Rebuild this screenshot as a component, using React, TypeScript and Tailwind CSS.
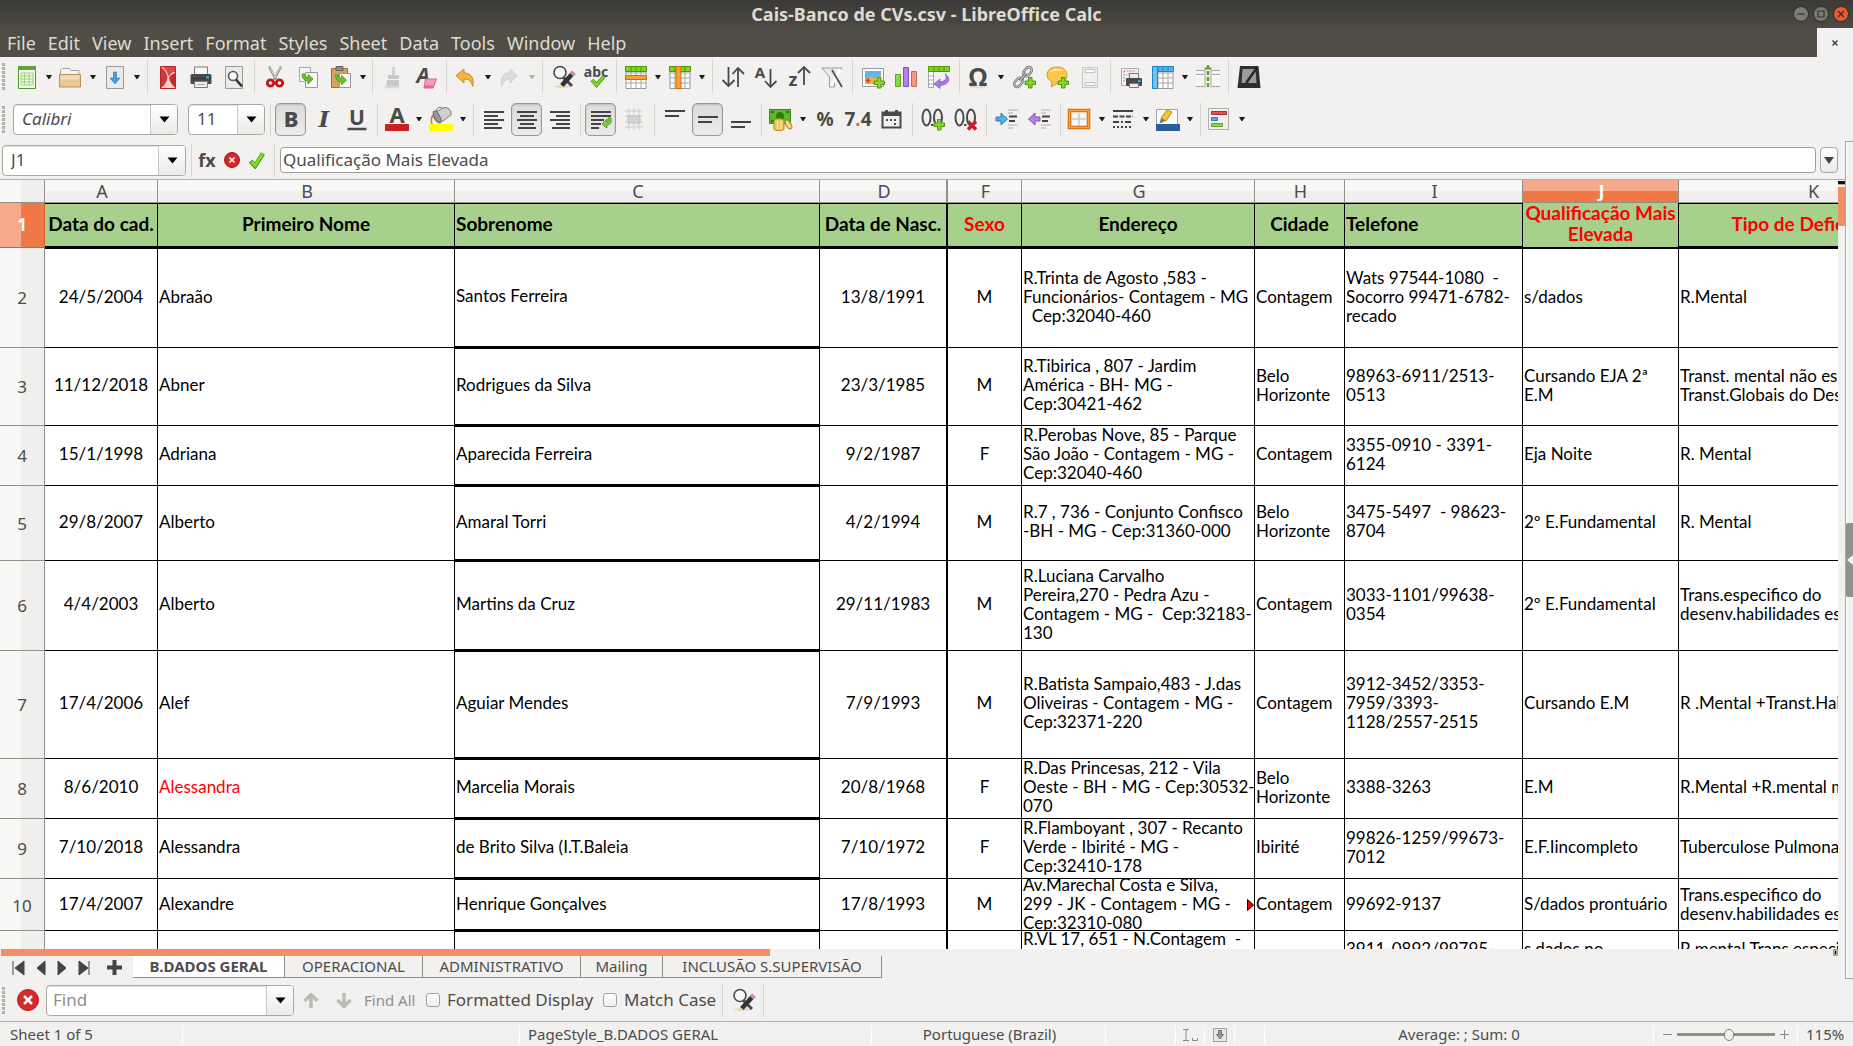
import React, { useState } from "react";

const UI = "font-['Noto_Sans','Open_Sans',sans-serif]";
const CELL = "font-['Lato','Liberation_Sans',sans-serif]";

/* ---------- toolbar primitives ---------- */

function Caret({ muted = false }: { muted?: boolean }) {
  return (
    <svg width="6" height="4" viewBox="0 0 6 4" aria-hidden="true">
      <path d="M0 0h6L3.5 4h-1z" fill={muted ? "#b5b4b2" : "#1a1a1a"} />
    </svg>
  );
}

function Icon({ children }: { children: React.ReactNode }) {
  return (
    <svg width="24" height="24" viewBox="0 0 24 24" fill="none" aria-hidden="true" className="shrink-0 overflow-visible">
      {children}
    </svg>
  );
}

function Tool({ label, pressed = false, children }: { label: string; pressed?: boolean; children: React.ReactNode }) {
  return (
    <button type="button" aria-label={label} title={label} className="flex h-9 w-[33px] shrink-0 items-center justify-center">
      <span
        className={
          pressed
            ? "flex h-[33px] w-[31px] items-center justify-center rounded-[5px] border border-[#9a9894] bg-linear-to-b from-[#dddcda] to-[#ecebe9] shadow-[inset_0_1px_2px_rgba(0,0,0,0.15)]"
            : "flex h-[33px] w-[31px] items-center justify-center"
        }
      >
        <Icon>{children}</Icon>
      </span>
    </button>
  );
}

function SplitTool({ label, muted = false, children }: { label: string; muted?: boolean; children: React.ReactNode }) {
  return (
    <span className="flex h-9 w-11 shrink-0">
      <button type="button" aria-label={label} title={label} className="flex w-8 items-center justify-center">
        <Icon>{children}</Icon>
      </button>
      <button type="button" aria-label={label + " options"} className="flex w-3 items-center justify-center">
        <Caret muted={muted} />
      </button>
    </span>
  );
}

function Sep() {
  return (
    <span className="flex h-[33px] w-2 shrink-0 justify-center">
      <span className="w-px bg-[#d6d4d1]" />
    </span>
  );
}

function Grip() {
  return (
    <span className="ml-[2px] flex h-[27px] w-[3px] shrink-0 flex-col justify-between">
      {[0, 1, 2, 3, 4, 5, 6].map((i) => (
        <span key={i} className="h-[3px] w-[3px] bg-[#b3b1ad]" />
      ))}
    </span>
  );
}

const FIELD = "flex h-[31px] shrink-0 overflow-hidden rounded-[4px] border border-[#aaa8a4] bg-white shadow-[inset_0_1px_1px_rgba(0,0,0,0.12)]";

function Combo({ label, width, value, placeholder, textClass }: { label: string; width: string; value?: string; placeholder?: string; textClass: string }) {
  return (
    <span className={`${FIELD} ${width}`}>
      <input
        aria-label={label}
        defaultValue={value}
        placeholder={placeholder}
        className={`min-w-0 flex-1 bg-transparent outline-none placeholder:text-[#8e8e8e] ${textClass}`}
      />
      <button type="button" aria-label={label + " list"} className="flex w-[27px] items-center justify-center border-l border-[#c9c7c4] bg-linear-to-b from-white to-[#ebeae8]">
        <svg width="11" height="7" viewBox="0 0 11 7" aria-hidden="true">
          <path d="M0.5 0.5h10L5.5 6.5z" fill="#000" />
        </svg>
      </button>
    </span>
  );
}

/* ---------- icon fragments ---------- */

const D = "#4a4a4a";

const Plus = () => <path d="M16.5 12.500h3.500v3.500h3.500v3.500h-3.500v3.500h-3.500v-3.500H13v-3.500h3.500z" fill="#8ad32f" stroke="#4b9a0c" />;
const Find = () => (
  <>
    <ellipse cx="12" cy="21.500" rx="9" ry="1.500" fill="#dcdad7" />
    <circle cx="9" cy="7.500" r="6" fill="#f7f7f7" stroke={D} strokeWidth="1.600" />
    <path d="M12 12l9 9" stroke={D} strokeWidth="3" />
    <path d="M19 8l3.500 3-10 11-3.500-3z" fill="#333" />
    <path d="M19 8l2-2 3.500 3-2 2z" fill="#d88acb" stroke="#9a5b8f" strokeWidth=".5" />
    <path d="M9 19l3.500 3L7.500 23.500z" fill="#f0df6a" />
  </>
);
const Printer = () => (
  <>
    <path d="M5.500 2h13v8h-13z" fill="#f8f8f8" stroke="#7b7b7b" />
    <rect x="1.500" y="9" width="21" height="10" rx="1.500" fill="#4a4a4a" />
    <path d="M2 13.500h20" stroke="#333" />
    <rect x="17" y="11.500" width="3" height="2" fill="#35b7ee" />
    <path d="M5.500 16.500h13v6h-13z" fill="#eee" stroke="#7b7b7b" />
    <path d="M8 19.500h8" stroke="#aaa" />
  </>
);
const Page = () => <path d="M3.500 1.500h17v22h-17z" fill="#eceae8" stroke="#9c9a97" />;
const Lines = ({ xs }: { xs: number[][] }) => (
  <>
    {xs.map(([x1, x2, y]) => (
      <path key={y} d={`M${x1} ${y}H${x2}`} stroke="#444" strokeWidth="2" />
    ))}
  </>
);
const GridBase = ({ top }: { top: string }) => (
  <>
    <path d="M2 1.500h20v22H2z" fill="#fff" stroke="#9a9a9a" />
    <path d="M2 8h20M2 13h20M2 18h20M7 4v20M12 4v20M17 4v20" stroke="#a3a3a3" />
    <path d="M1.500 1.500h21v5h-21z" fill={top} stroke={top === "#7ed321" ? "#4e9a06" : "#1a86c8"} />
    <path d="M7 2v4M12 2v4M17 2v4" stroke={top === "#7ed321" ? "#4e9a06" : "#1a86c8"} />
  </>
);
const T = ({ x, y, s, children, fill = D, w = 700, italic = false }: { x: number; y: number; s: number; children: string; fill?: string; w?: number; italic?: boolean }) => (
  <text x={x} y={y} fontSize={s} fontWeight={w} fill={fill} fontStyle={italic ? "italic" : "normal"} fontFamily="Noto Sans, sans-serif" textAnchor="middle">
    {children}
  </text>
);

function StandardBar() {
  return (
    <div role="toolbar" aria-label="Standard" className="flex h-[41px] shrink-0 items-center pb-[2px]">
      <Grip />
      <span className="w-[6px] shrink-0" />
      <SplitTool label="New">
        <path d="M3.500 1.500h17v22h-17z" fill="#f4fbef" stroke="#4f9a2b" />
        <path d="M3 1h18v4H3z" fill="#5da33a" />
        <path d="M6 8h12M6 11h12M6 14h12M6 17h12M6 20h12M6 8v12M9.500 8v12M14 8v12M18 8v12" stroke="#9ad07a" />
      </SplitTool>
      <SplitTool label="Open">
        <path d="M1.500 5l2-1.500h7l1.500 2h8v8H1.500z" fill="#f3f3f3" stroke="#a5a5a5" />
        <path d="M.5 9.500h21v12.500H.5z" fill="#e9c896" stroke="#b9935c" />
        <path d="M1.500 10.500h19v4h-19z" fill="#f3dcb6" />
      </SplitTool>
      <SplitTool label="Save">
        <Page />
        <path d="M10.500 7h3v6h3.500L12 19l-5-6h3.500z" fill="#3d9fe0" stroke="#2279bb" strokeWidth=".6" />
      </SplitTool>
      <Sep />
      <Tool label="Export as PDF">
        <path d="M4.500 1.500h15v22h-15z" fill="#f3d3d0" stroke="#b3262b" />
        <path d="M5 2c4 3 6 6 6.500 10.500C11 17 9 20 5 23z" fill="#cf3a3e" />
        <path d="M7 2h12v5c-3 0-5 2-6 5-1-4-3-7-6-10z" fill="#d9484b" />
        <path d="M13 13c1 4 3 7 6 9.500V8c-3 1-5 3-6 5z" fill="#c42a2e" />
      </Tool>
      <Tool label="Print"><Printer /></Tool>
      <Tool label="Print Preview">
        <Page />
        <circle cx="11" cy="11" r="4.500" fill="#f7f7f7" stroke="#5a5a5a" strokeWidth="1.600" />
        <path d="M14 14.500l6 7" stroke="#333" strokeWidth="2.600" />
      </Tool>
      <Sep />
      <Tool label="Cut">
        <path d="M6 1.500l7 13M18 1.500l-7 13" stroke="#8b8b8b" strokeWidth="2.400" />
        <path d="M6.500 2l6 11M17.500 2l-6 11" stroke="#e6e6e6" strokeWidth=".8" />
        <circle cx="7.500" cy="18" r="3.200" stroke="#c4161c" strokeWidth="2.800" />
        <circle cx="16.500" cy="18" r="3.200" stroke="#c4161c" strokeWidth="2.800" />
      </Tool>
      <Tool label="Copy">
        <path d="M3.500 2.500h11v14h-11z" fill="#f6f6f6" stroke="#a7a7a7" />
        <path d="M9.500 7.500h12v15h-12z" fill="#f9f9f9" stroke="#9a9a9a" />
        <path d="M6 9c0 5 3 7 6 7v3l5-5-5-4.500v3c-2 0-3-1.500-3-3.500z" fill="#6cc030" stroke="#3f8a12" strokeWidth=".7" />
      </Tool>
      <Tool label="Paste">
        <path d="M2.500 3.500h16v19h-16z" fill="#d3a25c" stroke="#9a6f33" />
        <path d="M7 1.500h7v4H7z" fill="#8a8a8a" stroke="#666" />
        <path d="M10.500 8.500h11v14h-11z" fill="#f9f9f9" stroke="#9a9a9a" />
        <path d="M6.500 10c0 5 3 7 6 7v3l5-5-5-4.500v3c-2 0-3-1.500-3-3.500z" fill="#6cc030" stroke="#3f8a12" strokeWidth=".7" />
      </Tool>
      <button type="button" aria-label="Paste options" className="flex h-9 w-[11px] shrink-0 items-center justify-center">
        <Caret />
      </button>
      <Sep />
      <Tool label="Clone Formatting">
        <path d="M11 2h3v8h-3z" fill="#d2d1cf" />
        <path d="M7 10h11v4H7zM6 15h12v6H5z" fill="#c9c8c6" />
        <ellipse cx="11" cy="22" rx="9" ry="1.500" fill="#dddbd9" />
      </Tool>
      <Tool label="Clear Direct Formatting">
        <T x={9} y={18} s={21} italic>A</T>
        <path d="M11.500 14h11l-3.500 9h-9z" fill="#f49ac0" stroke="#d8629a" />
        <path d="M10 20.500h10l-1 2.500h-9z" fill="#e8619b" />
      </Tool>
      <Sep />
      <SplitTool label="Undo">
        <path d="M2 10.500L10 4v4c6 0 11 4 8.500 13.500C17.500 16 15 14 10 14v4z" fill="#f5b63c" stroke="#c88a1c" />
      </SplitTool>
      <SplitTool label="Redo" muted>
        <path d="M19 10.500L12 4v4c-6 0-10 4-8 13.500C5 16 7.500 14 12 14v4z" fill="#dcdbd9" stroke="#cfcdcb" />
      </SplitTool>
      <Sep />
      <Tool label="Find and Replace"><Find /></Tool>
      <Tool label="Spelling">
        <T x={12} y={12} s={14}>abc</T>
        <path d="M8 15l4.500 5L20 11.500" stroke="#4c9a10" strokeWidth="4" />
        <path d="M8 15l4.500 5L20 11.500" stroke="#83d02c" strokeWidth="2.600" />
      </Tool>
      <Sep />
      <SplitTool label="Row">
        <GridBase top="#7ed321" />
        <path d="M1.500 10.500h21v4h-21z" fill="#f9a13a" stroke="#d66a0a" />
      </SplitTool>
      <SplitTool label="Column">
        <GridBase top="#7ed321" />
        <path d="M8 1.500h5v22H8z" fill="#f9a13a" stroke="#d66a0a" />
      </SplitTool>
      <Sep />
      <Tool label="Sort">
        <path d="M7.500 2v19M1.500 15l6 6 6-6M17 22V3M11.500 9L17 3l6 6" stroke={D} strokeWidth="1.800" />
      </Tool>
      <Tool label="Sort Ascending">
        <T x={6} y={13} s={15}>A</T>
        <path d="M16.500 4v18M11 16l5.500 6 6-6" stroke={D} strokeWidth="1.800" />
      </Tool>
      <Tool label="Sort Descending">
        <T x={6} y={21} s={18}>z</T>
        <path d="M17 20V2M11 8l6-6 6 6" stroke={D} strokeWidth="1.800" />
      </Tool>
      <Tool label="AutoFilter">
        <path d="M2 3h20l-7.500 9v10h-5V12z" fill="#e9e9e9" stroke="#9b9b9b" />
        <path d="M20 4l-9 17" stroke="#fff" strokeWidth="3" />
        <path d="M12 5l10 17" stroke="#555" strokeWidth="1.800" />
      </Tool>
      <Sep />
      <Tool label="Insert Image">
        <path d="M1.500 3.500h21v18h-21z" fill="#fff" stroke="#999" />
        <path d="M4 6h16v8H4z" fill="#5db8e8" />
        <path d="M4 14l5-2 5 1 6-2v8H4z" fill="#f2b23c" />
        <path d="M7 13v5M4.500 15.500h5" stroke="#d2441a" strokeWidth="1.600" />
        <Plus />
      </Tool>
      <Tool label="Insert Chart">
        <path d="M1.500 9.500h5v12h-5z" fill="#8ad84a" stroke="#5fa628" />
        <path d="M9.500 2.500h5v19h-5z" fill="#b184e6" stroke="#8251bd" />
        <path d="M17.500 6.500h5v15h-5z" fill="#ee9a8a" stroke="#cc6b5a" />
      </Tool>
      <Tool label="Pivot Table">
        <path d="M1.500 6.500h5v16h-5z" fill="#fff" stroke="#a5a5a5" />
        <path d="M2 11h5M2 15h5M2 19h5" stroke="#a5a5a5" />
        <path d="M1.500 1.500h21v5h-21z" fill="#7ed321" stroke="#4e9a06" />
        <path d="M7 2v4M12 2v4M17 2v4" stroke="#4e9a06" />
        <path d="M18 9c2 3 2 7-5 8v-3l-6 5 6 4.500v-3c9-1 12-7 5-11.500z" fill="#a67be0" stroke="#7a4dbb" strokeWidth=".7" />
      </Tool>
      <Sep />
      <SplitTool label="Special Character">
        <ellipse cx="11" cy="22" rx="9" ry="1.500" fill="#e0deda" />
        <T x={11} y={21} s={25}>Ω</T>
      </SplitTool>
      <Tool label="Insert Hyperlink">
        <g transform="rotate(-50 11 12)">
          <rect x="-1" y="9" width="10" height="6" rx="3" stroke="#6f6f6f" strokeWidth="2.600" />
          <rect x="-1" y="9" width="10" height="6" rx="3" stroke="#cfcfcf" />
          <rect x="13" y="9" width="10" height="6" rx="3" stroke="#6f6f6f" strokeWidth="2.600" />
          <rect x="13" y="9" width="10" height="6" rx="3" stroke="#cfcfcf" />
          <path d="M6 12h10" stroke="#6f6f6f" strokeWidth="3" />
          <path d="M6 12h10" stroke="#cfcfcf" />
        </g>
        <Plus />
      </Tool>
      <Tool label="Insert Comment">
        <path d="M12 2c6 0 10 3 10 8s-4 8-9 8l-7 4 1-5c-3-1.500-5-4-5-7 0-5 4-8 10-8z" fill="#fbc94a" stroke="#d79a1e" />
        <path d="M5 7c2-4 11-4 14-1-4-1-9 0-14 1z" fill="#fde7a6" />
        <Plus />
      </Tool>
      <Tool label="Headers and Footers">
        <path d="M4.500 2.500h15v20h-15z" fill="#f0efed" stroke="#c9c7c4" />
        <path d="M7 4.500h10v3H7zM7 17.500h10v3H7z" fill="#fafafa" stroke="#c4c2bf" />
      </Tool>
      <Sep />
      <Tool label="Define Print Area">
        <path d="M2.500 3.500h17v17h-17z" fill="#f5f5f5" stroke="#aaa" />
        <path d="M5 6h12M5 6v12" stroke="#e0525a" strokeDasharray="1.500 1.500" />
        <path d="M5 10h12M5 14h6M10 5v12M14 5v4" stroke="#ccc" />
        <path d="M10.500 8.500h9v5h-9z" fill="#eee" stroke="#777" />
        <rect x="7" y="13" width="16" height="8" rx="1" fill="#4a4a4a" />
        <rect x="19" y="15" width="2.500" height="2" fill="#35b7ee" />
        <path d="M10.500 18.500h9v4h-9z" fill="#eee" stroke="#777" />
      </Tool>
      <SplitTool label="Freeze Rows and Columns">
        <GridBase top="#4fb4ee" />
        <path d="M1.500 1.500h5v22h-5z" fill="#6cc0f2" stroke="#1a86c8" />
      </SplitTool>
      <Tool label="Split Window">
        <path d="M0 5.500h9v16H0zM15 5.500h9v16h-9z" fill="#f6f6f6" />
        <path d="M0 5.500h9v17M24 5.500h-9v17M0 9.500h8M16 9.500h8M0 21.500h8M16 21.500h8" stroke="#a5a5a5" />
        <path d="M12 0v24" stroke="#5aa626" strokeWidth="2.500" strokeDasharray="4 2" />
        <path d="M8.500 3.500h7" stroke="#5aa626" strokeWidth="2" />
      </Tool>
      <Sep />
      <Tool label="Show Draw Functions">
        <path d="M3 1h18.500l2 22H0.500z" fill="#2e2e2e" />
        <path d="M5.500 4h13l1 14h-15z" fill="#9b9b9b" />
        <path d="M19 2L9 16l-1 3 3-1.500L21 3z" fill="#222" />
      </Tool>
    </div>
  );
}

function FormattingBar() {
  return (
    <div role="toolbar" aria-label="Formatting" className="flex h-[43px] shrink-0 items-center pb-px">
      <Grip />
      <span className="w-2 shrink-0" />
      <Combo label="Font name" width="w-[165px]" value="Calibri" textClass="pl-2 text-[17px] italic text-[#4c4c4c]" />
      <span className="w-[10px] shrink-0" />
      <Combo label="Font size" width="w-[77px]" value="11" textClass="pl-2 text-[17px] text-[#4c4c4c]" />
      <span className="w-px shrink-0" />
      <Sep />
      <Tool label="Bold" pressed><T x={12} y={20} s={22} w={800}>B</T></Tool>
      <Tool label="Italic">
        <text x="12" y="20" fontSize="23" fontWeight="700" fontStyle="italic" fill={D} fontFamily="DejaVu Serif, serif" textAnchor="middle">I</text>
      </Tool>
      <Tool label="Underline">
        <T x={12} y={18} s={21}>U</T>
        <path d="M2.500 22h19" stroke={D} strokeWidth="2.500" />
      </Tool>
      <Sep />
      <SplitTool label="Font Color">
        <T x={12} y={16} s={22}>A</T>
        <path d="M0 17h24v7H0z" fill="#c9211e" />
      </SplitTool>
      <SplitTool label="Highlighting Color">
        <path d="M5 6l9-5c5-2 9 3 8 7l-11 8C7 16 3 10 5 6z" fill="#cfcfcf" stroke="#777" />
        <ellipse cx="8" cy="9.500" rx="2.500" ry="6" transform="rotate(-30 8 9.500)" fill="#9a9a9a" stroke="#666" />
        <path d="M7 5c0-4 4-6 6-4" stroke="#666" />
        <path d="M4 8c-2 3-2 6-1 9" stroke="#d9761a" strokeWidth="1.500" />
        <path d="M0 17h24v7H0z" fill="#ffff00" />
      </SplitTool>
      <Sep />
      <Tool label="Align Left"><Lines xs={[[2, 22, 5], [2, 16, 9], [2, 22, 13], [2, 16, 17], [2, 20, 21]]} /></Tool>
      <Tool label="Center Horizontally" pressed><Lines xs={[[2, 22, 5], [5, 19, 9], [2, 22, 13], [5, 19, 17], [3, 21, 21]]} /></Tool>
      <Tool label="Align Right"><Lines xs={[[2, 22, 5], [8, 22, 9], [2, 22, 13], [8, 22, 17], [4, 22, 21]]} /></Tool>
      <Sep />
      <Tool label="Wrap Text" pressed>
        <Lines xs={[[2, 22, 5], [2, 22, 9], [2, 15, 13], [2, 12, 17], [2, 10, 21]]} />
        <path d="M19 11h3c1 5-1 7-4 7v3l-5-4 5-5v3c1 0 1.500-1 1-4z" fill="#7cc93a" stroke="#3f8a12" strokeWidth=".7" />
      </Tool>
      <Tool label="Merge and Center Cells">
        <path d="M3 4h18M3 9h18M3 15h18M3 20h18M7 1v22M12 1v8M12 15v8M17 1v22" stroke="#cfcdcb" />
        <path d="M6 9h12v7H6z" fill="#d6d4d2" stroke="#c2c0bd" />
      </Tool>
      <Sep />
      <Tool label="Align Top"><Lines xs={[[2, 22, 4], [2, 16, 9]]} /></Tool>
      <Tool label="Center Vertically" pressed><Lines xs={[[2, 22, 10], [2, 16, 15]]} /></Tool>
      <Tool label="Align Bottom"><Lines xs={[[2, 22, 15], [2, 16, 20]]} /></Tool>
      <Sep />
      <SplitTool label="Format as Currency">
        <path d="M.5 2.500h21v14h-21z" fill="#5eb52e" stroke="#3a8a14" />
        <path d="M2 4h3v2H2zM17 4h3v2h-3zM2 13h3v2H2z" fill="#2f7d0c" />
        <circle cx="11" cy="9" r="4" fill="#2f7d0c" />
        <path d="M5 14c0-3 10-3 10 0v8c0 2-10 2-10 0z" fill="#e9c964" stroke="#a88424" />
        <path d="M8.500 14v9M12 14v9" stroke="#f9e9a9" />
        <ellipse cx="19.500" cy="17.500" rx="2.500" ry="5" transform="rotate(-30 19.500 17.500)" fill="#f1d87c" stroke="#a88424" />
      </SplitTool>
      <Tool label="Format as Percent"><T x={11} y={19} s={19}>%</T></Tool>
      <Tool label="Format as Number">
        <text x="11" y="19" fontSize="19" fontWeight="700" fill={D} fontFamily="Noto Sans, sans-serif" textAnchor="middle">7<tspan fill="#ed6b1c">.</tspan>4</text>
      </Tool>
      <Tool label="Format as Date">
        <path d="M2.500 5.500h18v15h-18z" fill="#f2f1f0" stroke={D} strokeWidth="2" />
        <path d="M2 5h19v4H2zM5 3h3v4H5zM15 3h3v4h-3z" fill={D} />
        <path d="M6 13h2M10 13h2M14 13h2M14 17h2" stroke={D} strokeWidth="2" />
      </Tool>
      <Sep />
      <Tool label="Add Decimal Place">
        <ellipse cx="5.500" cy="10.500" rx="4" ry="8" stroke={D} strokeWidth="2" />
        <ellipse cx="17" cy="10.500" rx="4" ry="8" stroke={D} strokeWidth="2" />
        <path d="M10 18h2.500" stroke={D} strokeWidth="2" />
        <Plus />
      </Tool>
      <Tool label="Delete Decimal Place">
        <ellipse cx="5.500" cy="10.500" rx="4" ry="8" stroke={D} strokeWidth="2" />
        <ellipse cx="17" cy="10.500" rx="4" ry="8" stroke={D} strokeWidth="2" />
        <path d="M10 18h2.500" stroke={D} strokeWidth="2" />
        <path d="M14 14.500l8 8M22 14.500l-8 8" stroke="#c5202a" strokeWidth="3.500" />
      </Tool>
      <Sep />
      <Tool label="Increase Indent">
        <path d="M13 3h10M13 6h5M13 18h10M13 21h5" stroke="#b0aeab" />
        <path d="M14 9.500h8M14 14h6" stroke="#444" strokeWidth="2" />
        <path d="M1 10h5V6l6.500 6L6 18v-4H1z" fill="#4fb0e6" stroke="#2a7fb5" />
      </Tool>
      <Tool label="Decrease Indent">
        <path d="M13 3h10M13 6h5M13 18h10M13 21h5" stroke="#b0aeab" />
        <path d="M14 9.500h8M14 14h6" stroke="#444" strokeWidth="2" />
        <path d="M12 10H7V6L.5 12 7 18v-4h5z" fill="#b184e6" stroke="#8251bd" />
      </Tool>
      <Sep />
      <SplitTool label="Borders">
        <path d="M1.500 3.500h19v17h-19z" fill="#f6f6f6" stroke="#d2640a" strokeWidth="3.500" />
        <path d="M1.500 3.500h19v17h-19z" stroke="#fba63c" strokeWidth="1.500" />
        <path d="M11 6v13M4 12h14" stroke="#b5b5b5" />
      </SplitTool>
      <SplitTool label="Border Style">
        <path d="M1 4h20" stroke="#444" strokeWidth="2" />
        <path d="M1 9.500h20" stroke="#444" strokeWidth="2" strokeDasharray="5 1.500" />
        <path d="M1 15h20" stroke="#444" strokeWidth="2" strokeDasharray="6 2 2 2" />
        <path d="M1 20h20" stroke="#444" strokeWidth="2" strokeDasharray="2 2" />
      </SplitTool>
      <SplitTool label="Border Color">
        <path d="M.5 2.500h21v18H.5z" fill="#fafafa" stroke="#a5a5a5" />
        <path d="M11 3l5 2-6 9-5-3z" fill="#f3c63a" stroke="#b98c12" />
        <path d="M5 11l4.500 3-6 2.500z" fill="#777" />
        <path d="M0 17h24v7H0z" fill="#2a6099" />
      </SplitTool>
      <Sep />
      <SplitTool label="Conditional Formatting">
        <path d="M.5 1.500h20v21H.5z" fill="#f1f0ee" stroke="#b0aeab" />
        <path d="M3.500 4.500h15v3h-15z" fill="#e0525a" stroke="#b02a32" />
        <path d="M3.500 10.500h6v3h-6z" fill="#4fb0e6" stroke="#2a7fb5" />
        <path d="M3.500 16.500h11v3h-11z" fill="#8ad84a" stroke="#5fa628" />
      </SplitTool>
    </div>
  );
}

function FormulaBar() {
  return (
    <div className="flex h-[38px] shrink-0 items-center">
      <span className="w-[2px]" />
      <Combo label="Name box" width="w-[184px]" value="J1" textClass="pl-2 pb-px text-[17px] text-[#4c4c4c]" />
      <span className="w-px" />
      <Sep />
      <button type="button" aria-label="Function Wizard" className="ml-1 flex w-4 justify-center text-lg leading-5 font-bold text-[#4a4a4a]">fx</button>
      <button type="button" aria-label="Cancel" className="ml-[9px]">
        <svg width="16" height="16" viewBox="0 0 16 16" aria-hidden="true">
          <circle cx="8" cy="8" r="7.500" fill="#d9262c" stroke="#a5161b" />
          <path d="M5.500 5.500l5 5M10.500 5.500l-5 5" stroke="#fff" strokeWidth="1.500" />
        </svg>
      </button>
      <button type="button" aria-label="Accept" className="ml-2">
        <svg width="18" height="18" viewBox="0 0 18 18" aria-hidden="true">
          <path d="M2.500 10l4.500 5L15 2.500" fill="none" stroke="#4c9a10" strokeWidth="4.500" />
          <path d="M3 10.500l4 4L14.500 3" fill="none" stroke="#86d830" strokeWidth="2.800" />
        </svg>
      </button>
      <span className="w-1" />
      <Sep />
      <input
        aria-label="Input line"
        defaultValue="Qualificação Mais Elevada"
        className="ml-[2px] h-[26px] min-w-0 flex-1 rounded-[4px] border border-[#9f9d99] bg-white px-[2px] pb-px text-[17px] text-[#4c4c4c] outline-none"
      />
      <button type="button" aria-label="Expand formula bar" className="mr-[7px] ml-1 flex h-[26px] w-[18px] items-center justify-center rounded-[4px] border border-[#aaa8a4] bg-linear-to-b from-white to-[#ebeae8]">
        <svg width="10" height="7" viewBox="0 0 10 7" aria-hidden="true"><path d="M0 0h10L5 7z" fill="#444" /></svg>
      </button>
    </div>
  );
}

/* ---------- sheet ---------- */

type Col = { id: string; w: string; head: string; headClass?: string; center?: boolean };
const COLS: Col[] = [
  { id: "A", w: "w-[113px]", head: "Data do cad.", headClass: "justify-center", center: true },
  { id: "B", w: "w-[297px]", head: "Primeiro Nome", headClass: "justify-center" },
  { id: "C", w: "w-[365px]", head: "Sobrenome" },
  { id: "D", w: "w-[128px]", head: "Data de Nasc.", headClass: "justify-center", center: true },
  { id: "F", w: "w-[74px]", head: "Sexo", headClass: "justify-center text-[#ff0000]", center: true },
  { id: "G", w: "w-[233px]", head: "Endereço", headClass: "justify-center" },
  { id: "H", w: "w-[90px]", head: "Cidade", headClass: "justify-center" },
  { id: "I", w: "w-[178px]", head: "Telefone" },
  { id: "J", w: "w-[156px]", head: "Qualificação Mais\nElevada", headClass: "justify-center text-[#ff0000]" },
  { id: "K", w: "w-[268px]", head: "Tipo de Deficiência", headClass: "justify-center text-[#ff0000]" },
];

type Row = { n: number; h: string; cells: string[] };
const ROWS: Row[] = [
  { n: 2, h: "h-[100px] pb-1", cells: ["24/5/2004", "Abraão", "Santos Ferreira", "13/8/1991", "M", "R.Trinta de Agosto ,583 -\nFuncionários- Contagem - MG\n  Cep:32040-460", "Contagem", "Wats 97544-1080  -\nSocorro 99471-6782-\nrecado", "s/dados", "R.Mental"] },
  { n: 3, h: "h-[78px] pb-1", cells: ["11/12/2018", "Abner", "Rodrigues da Silva", "23/3/1985", "M", "R.Tibirica , 807 - Jardim\nAmérica - BH- MG -\nCep:30421-462", "Belo\nHorizonte", "98963-6911/2513-\n0513", "Cursando EJA 2ª\nE.M", "Transt. mental não especificado\nTranst.Globais do Desenvolv."] },
  { n: 4, h: "h-[60px] pb-1", cells: ["15/1/1998", "Adriana", "Aparecida Ferreira", "9/2/1987", "F", "R.Perobas Nove, 85 - Parque\nSão João - Contagem - MG -\nCep:32040-460", "Contagem", "3355-0910 - 3391-\n6124", "Eja Noite", "R. Mental"] },
  { n: 5, h: "h-[75px] pb-1", cells: ["29/8/2007", "Alberto", "Amaral Torri", "4/2/1994", "M", "R.7 , 736 - Conjunto Confisco\n-BH - MG - Cep:31360-000", "Belo\nHorizonte", "3475-5497  - 98623-\n8704", "2º E.Fundamental", "R. Mental"] },
  { n: 6, h: "h-[90px] pb-1", cells: ["4/4/2003", "Alberto", "Martins da Cruz", "29/11/1983", "M", "R.Luciana Carvalho\nPereira,270 - Pedra Azu -\nContagem - MG -  Cep:32183-\n130", "Contagem", "3033-1101/99638-\n0354", "2º E.Fundamental", "Trans.especifico do\ndesenv.habilidades escolares"] },
  { n: 7, h: "h-[108px] pb-1", cells: ["17/4/2006", "Alef", "Aguiar Mendes", "7/9/1993", "M", "R.Batista Sampaio,483 - J.das\nOliveiras - Contagem - MG -\nCep:32371-220", "Contagem", "3912-3452/3353-\n7959/3393-\n1128/2557-2515", "Cursando E.M", "R .Mental +Transt.Habilidades"] },
  { n: 8, h: "h-[60px] pb-1", cells: ["8/6/2010", "Alessandra", "Marcelia Morais", "20/8/1968", "F", "R.Das Princesas, 212 - Vila\nOeste - BH - MG - Cep:30532-\n070", "Belo\nHorizonte", "3388-3263", "E.M", "R.Mental +R.mental moderado"] },
  { n: 9, h: "h-[60px] pb-1", cells: ["7/10/2018", "Alessandra", "de Brito Silva (I.T.Baleia", "7/10/1972", "F", "R.Flamboyant , 307 - Recanto\nVerde - Ibirité - MG -\nCep:32410-178", "Ibirité", "99826-1259/99673-\n7012", "E.F.Iincompleto", "Tuberculose Pulmonar"] },
  { n: 10, h: "h-[52px] pb-[2px]", cells: ["17/4/2007", "Alexandre", "Henrique Gonçalves", "17/8/1993", "M", "Av.Marechal Costa e Silva,\n299 - JK - Contagem - MG -\nCep:32310-080", "Contagem", "99692-9137", "S/dados prontuário", "Trans.especifico do\ndesenv.habilidades escolares"] },
  { n: 11, h: "h-[75px] pb-[2px]", cells: ["", "", "", "", "", "R.VL 17, 651 - N.Contagem  -\n\n\n\n", "", "3911-0892/99795-\n\n\n", "s.dados no\n\n\n", "R.mental Trans.especifico\n\n\n"] },
];

const HEAD_BG = "bg-[linear-gradient(to_bottom,#f8f8f7_50%,#f0efed_50%)]";
const ROW_BG = "bg-[linear-gradient(to_right,#f8f8f7_21px,#f0efed_21px)]";

function Sheet() {
  return (
    <table className="w-max table-fixed border-separate border-spacing-0">
      <thead>
        <tr>
          <th className="p-0"><div className={`h-[23px] w-[45px] border-r border-b border-[#918f8b] ${ROW_BG}`} /></th>
          {COLS.map((c) => (
            <th key={c.id} scope="col" className="p-0 text-lg font-normal text-[#4c4c4c]">
              <div
                className={`flex h-[23px] items-center justify-center border-b border-[#918f8b] pl-[2px] leading-5 ${c.w} ${c.id === "D" ? "border-r-2" : "border-r"} ${
                  c.id === "J" ? "bg-[linear-gradient(to_bottom,#f7a98b_50%,#f07746_50%)] font-bold text-white" : HEAD_BG
                }`}
              >
                {c.id}
              </div>
            </th>
          ))}
        </tr>
      </thead>
      <tbody>
        <tr>
          <th scope="row" className="p-0">
            <div className="flex h-[45px] w-[45px] items-center justify-center border-r border-b border-[#d2602f] bg-[linear-gradient(to_right,#f7a98b_21px,#f07746_21px)] text-[17px] font-bold text-white">1</div>
          </th>
          {COLS.map((c) => (
            <th key={c.id} className={`p-0 ${CELL}`}>
              <div
                className={`flex h-[45px] items-center overflow-hidden border-black bg-[#a8d08d] pb-1 text-[19px] leading-[21px] font-bold whitespace-pre ${c.w} ${
                  c.id === "D" ? "border-r-2" : "border-r"
                } ${c.id === "J" ? "border-b" : "border-t border-b-2"} ${c.headClass ?? "pl-px"}`}
              >
                <span>{c.head}</span>
              </div>
            </th>
          ))}
        </tr>
        {ROWS.map((r, ri) => (
          <tr key={r.n}>
            <th scope="row" className="p-0">
              <div className={`flex w-[45px] items-center justify-center border-r border-b border-[#918f8b] text-[17px] font-normal text-[#4c4c4c] ${r.h} ${ROW_BG}`}>
                <span className="pt-[5px]">{r.n}</span>
              </div>
            </th>
            {COLS.map((c, ci) => (
              <td key={c.id} className={`p-0 ${CELL}`}>
                <div
                  className={`relative flex items-center overflow-hidden border-black bg-white text-[17px] leading-[19px] whitespace-pre ${c.w} ${r.h} ${
                    c.id === "D" ? "border-r-2" : "border-r"
                  } ${c.id === "C" ? "border-b-2" : "border-b"} ${ri === 0 || c.id === "C" ? "border-t" : ""} ${c.center ? "justify-center" : "pl-px"} ${
                    r.n === 8 && c.id === "B" ? "text-[#ff0000]" : "text-black"
                  }`}
                >
                  <span>{r.cells[ci]}</span>
                  {r.n === 10 && c.id === "G" && (
                    <svg className="absolute top-5 right-0" width="7" height="12" viewBox="0 0 7 12" aria-hidden="true">
                      <path d="M.5.5v11L6.500 6z" fill="#ff0000" stroke="#000" />
                    </svg>
                  )}
                </div>
              </td>
            ))}
          </tr>
        ))}
      </tbody>
    </table>
  );
}

function SheetTabs() {
  const tabs = [
    { name: "B.DADOS GERAL", w: "w-[152px]" },
    { name: "OPERACIONAL", w: "w-[138px]" },
    { name: "ADMINISTRATIVO", w: "w-[158px]" },
    { name: "Mailing", w: "w-[82px]" },
    { name: "INCLUSÃO S.SUPERVISÃO", w: "w-[219px]" },
  ];
  const nav = [
    { l: "First sheet", d: "M1 1v14M12 1v14L3 8z" },
    { l: "Previous sheet", d: "M11 1v14L3 8z" },
    { l: "Next sheet", d: "M2 1v14l8-7z" },
    { l: "Last sheet", d: "M1 1v14l9-7zM11 1v14" },
  ];
  return (
    <div className="flex h-[23px] shrink-0 items-center">
      <span className="w-[7px]" />
      {nav.map((n) => (
        <button key={n.l} type="button" aria-label={n.l} className="flex w-[22px] items-center justify-center">
          <svg width="13" height="16" viewBox="0 0 13 16" aria-hidden="true">
            <path d={n.d} fill="#444" stroke="#444" strokeWidth="1" />
          </svg>
        </button>
      ))}
      <button type="button" aria-label="Add sheet" className="flex w-[38px] items-center justify-center">
        <svg width="15" height="15" viewBox="0 0 15 15" aria-hidden="true"><path d="M7.500 0v15M0 7.500h15" stroke="#444" strokeWidth="4" /></svg>
      </button>
      <div role="tablist" className="flex h-full pb-px text-[15px] text-[#4c4c4c]">
        {tabs.map((t, i) => (
          <button
            key={t.name}
            type="button"
            role="tab"
            aria-selected={i === 0}
            className={`flex h-full items-center justify-center border-r border-b border-[#8f8d89] whitespace-nowrap ${t.w} ${i === 0 ? "bg-white font-bold" : ""}`}
          >
            {t.name}
          </button>
        ))}
      </div>
    </div>
  );
}

function Check({ label }: { label: string }) {
  return (
    <label className="flex items-center gap-[7px] text-[17px] whitespace-nowrap text-[#4c4c4c]">
      <input type="checkbox" className="h-[14px] w-[14px] appearance-none rounded-[3px] border border-[#a3a19d] bg-linear-to-b from-white to-[#f0efed] checked:bg-[#f07746]" />
      {label}
    </label>
  );
}

function FindBar() {
  return (
    <div className="flex h-[42px] shrink-0 items-center">
      <Grip />
      <button type="button" aria-label="Close Find Bar" className="ml-3">
        <svg width="22" height="22" viewBox="0 0 22 22" aria-hidden="true">
          <circle cx="11" cy="11" r="10.500" fill="#d8292f" stroke="#b01c22" />
          <path d="M7 7l8 8M15 7l-8 8" stroke="#fff" strokeWidth="2.500" />
        </svg>
      </button>
      <span className="w-[7px]" />
      <Combo label="Find" width="w-[248px]" placeholder="Find" textClass="pl-[6px] text-[17px] text-[#4c4c4c]" />
      <button type="button" aria-label="Find Previous" className="flex w-[33px] justify-center">
        <svg width="16" height="15" viewBox="0 0 16 15" aria-hidden="true"><path d="M1.500 8L8 1.500 14.500 8M8 2v13" fill="none" stroke="#bdbbb8" strokeWidth="3.500" /></svg>
      </button>
      <button type="button" aria-label="Find Next" className="flex w-[33px] justify-center">
        <svg width="16" height="15" viewBox="0 0 16 15" aria-hidden="true"><path d="M1.500 7L8 13.500 14.500 7M8 13V0" fill="none" stroke="#bdbbb8" strokeWidth="3.500" /></svg>
      </button>
      <button type="button" className="w-[66px] pl-1 text-left text-[15px] whitespace-nowrap text-[#8e8e8e]">Find All</button>
      <span className="w-[177px]"><Check label="Formatted Display" /></span>
      <span className="w-[115px]"><Check label="Match Case" /></span>
      <Sep />
      <Tool label="Find and Replace"><Find /></Tool>
      <Sep />
    </div>
  );
}

function StatusBar() {
  const [zoom, setZoom] = useState(54);
  const item = "flex h-[18px] shrink-0 items-center border-r border-white whitespace-nowrap";
  return (
    <footer className="flex h-[25px] shrink-0 items-center border-t border-[#b3b1ad] pt-px text-[15px] text-[#4c4c4c]">
      <span className={`${item} w-[183px] pl-[10px]`}>Sheet 1 of 5</span>
      <span className={`${item} w-[337px]`} />
      <span className={`${item} w-[352px] pl-2`}>PageStyle_B.DADOS GERAL</span>
      <span className={`${item} w-[234px] justify-center pl-[2px]`}>Portuguese (Brazil)</span>
      <span className={`${item} w-[70px]`} />
      <span className={`${item} w-[29px] justify-center`}>
        <svg width="16" height="14" viewBox="0 0 16 14" aria-hidden="true"><path d="M1 1.500h6M1 12.500h6M4 1.500v11M10.500 10v2.500h5V10" fill="none" stroke="#8a8a8a" /></svg>
      </span>
      <span className={`${item} w-[30px] justify-center`}>
        <svg width="14" height="14" viewBox="0 0 14 14" aria-hidden="true">
          <path d="M.5.5h13v13H.5z" fill="#e8e6e4" stroke="#a5a39f" />
          <path d="M5.500 2.500h3v4H10.500L7 11 3.500 6.500h2z" fill="#999" stroke="#555" strokeWidth=".7" />
        </svg>
      </span>
      <span className={`${item} w-[30px]`} />
      <span className="flex h-[18px] min-w-0 flex-1 items-center justify-center border-r border-white whitespace-nowrap">Average: ; Sum: 0</span>
      <span className={`${item} w-[144px] justify-center gap-[5px] text-[#8a8a8a]`}>
        <button type="button" aria-label="Zoom out"><svg width="9" height="9" viewBox="0 0 9 9"><path d="M0 4.500h9" stroke="#8a8a8a" /></svg></button>
        <input
          type="range"
          aria-label="Zoom"
          value={zoom}
          onChange={(e) => setZoom(Number(e.target.value))}
          className="h-3 w-[98px] appearance-none bg-[linear-gradient(#918f89,#918f89)] bg-[length:100%_3px] bg-center bg-no-repeat [&::-webkit-slider-thumb]:h-3 [&::-webkit-slider-thumb]:w-[10px] [&::-webkit-slider-thumb]:appearance-none [&::-webkit-slider-thumb]:rounded-full [&::-webkit-slider-thumb]:border [&::-webkit-slider-thumb]:border-[#85837f] [&::-webkit-slider-thumb]:bg-[#f2f1f0]"
        />
        <button type="button" aria-label="Zoom in"><svg width="9" height="9" viewBox="0 0 9 9"><path d="M0 4.500h9M4.500 0v9" stroke="#8a8a8a" /></svg></button>
      </span>
      <span className="w-[55px] shrink-0 pl-2">115%</span>
    </footer>
  );
}

function WindowButton({ label, close = false, d }: { label: string; close?: boolean; d: string }) {
  return (
    <button type="button" aria-label={label} className="h-4 w-4">
      <svg width="16" height="16" viewBox="0 0 16 16" aria-hidden="true">
        <circle cx="8" cy="8" r="7.500" fill={close ? "#ee5a2e" : "#7c7a74"} stroke="#2f2e2b" />
        <path d={d} fill="none" stroke="#33322e" strokeWidth="1.200" />
      </svg>
    </button>
  );
}

export default function App() {
  const menus = ["File", "Edit", "View", "Insert", "Format", "Styles", "Sheet", "Data", "Tools", "Window", "Help"];
  return (
    <div className={`flex h-screen w-full flex-col overflow-hidden bg-[#f2f1f0] ${UI}`}>
      <header className="flex h-7 shrink-0 items-center bg-linear-to-b from-[#3b3a36] to-[#4c4a43] pr-1">
        <span className="w-[68px] shrink-0" />
        <h1 className="flex-1 text-center text-[18px] leading-6 font-bold text-[#dfdbd2]">Cais-Banco de CVs.csv - LibreOffice Calc</h1>
        <div className="flex w-16 shrink-0 justify-end gap-1">
          <WindowButton label="Minimize" d="M4.500 8h7" />
          <WindowButton label="Maximize" d="M5 5h6v6H5z" />
          <WindowButton label="Close" close d="M5 5l6 6M11 5l-6 6" />
        </div>
      </header>
      <nav className="flex h-[29px] shrink-0 items-center bg-[#504d46]">
        <div className="flex flex-1 gap-3 pl-[7px] text-[18px] leading-6 text-[#dfdbd2]">
          {menus.map((m) => (
            <button key={m} type="button">{m}</button>
          ))}
        </div>
        <button type="button" aria-label="Close document" className="flex h-full w-9 items-center justify-center bg-[#f2f1f0]">
          <svg width="6" height="6" viewBox="0 0 6 6" aria-hidden="true"><path d="M.5.5l5 5M5.500.5l-5 5" stroke="#3c3c3c" strokeWidth="1.400" /></svg>
        </button>
      </nav>
      <StandardBar />
      <FormattingBar />
      <main className="flex min-h-0 flex-1">
        <div className="flex min-w-0 flex-1 flex-col">
          <FormulaBar />
          <div className="flex min-h-0 flex-1 border-t border-[#b3b1ad]">
            <div className="min-w-0 flex-1 overflow-hidden">
              <Sheet />
            </div>
            <div className="w-[7px] shrink-0">
              <div className="mt-px h-[3px] bg-[#111]" />
              <div className="h-[3px] border-t border-[#b3b1ad]" />
              <div className="h-[39px] bg-[#f28f68]" />
            </div>
          </div>
          <div className="flex h-[7px] shrink-0 justify-between">
            <div className="ml-px h-full w-5/12 bg-[#f28f68]" />
            <div className="mr-[7px] h-full w-[5px] border-2 border-[#a5a39f] bg-black" />
          </div>
          <SheetTabs />
        </div>
        <aside className="flex w-2 shrink-0 flex-col justify-center border-y border-l border-[#aaa8a4] shadow-[inset_1px_0_0_#fff]">
          <button type="button" aria-label="Show sidebar" className="flex h-[74px] items-center justify-center rounded-l-[2px] bg-[#92908a]">
            <svg width="6" height="10" viewBox="0 0 6 10" aria-hidden="true"><path d="M6 0v10L0 5z" fill="#f2f1f0" /></svg>
          </button>
        </aside>
      </main>
      <FindBar />
      <StatusBar />
    </div>
  );
}
